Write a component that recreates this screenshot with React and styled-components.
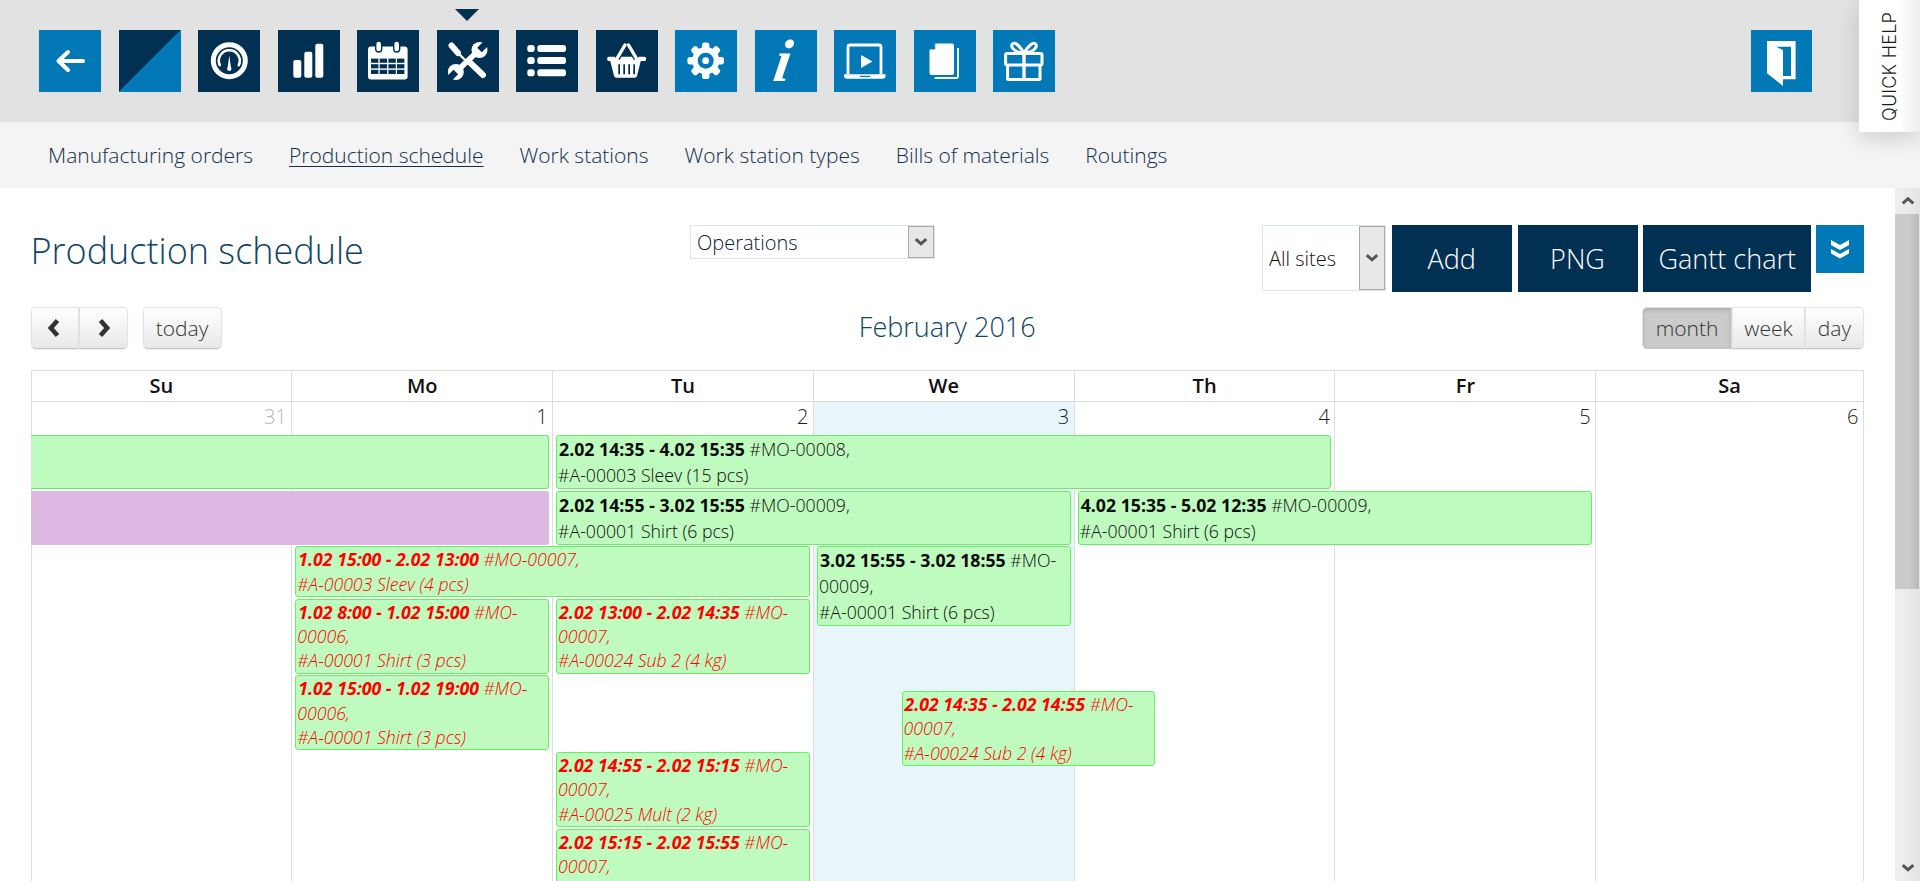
import React from 'react'
import styled, { createGlobalStyle, css } from 'styled-components'

const GlobalStyle = createGlobalStyle`
    html, body {
        margin: 0;
        padding: 0;
        height: 100%;
        overflow: hidden;
        background: white;
        font-family: "Open Sans", "Liberation Sans", sans-serif;
        font-weight: 300;
        color: #12293f;
    }
    * { box-sizing: border-box; }
`

const Page = styled.div`
    position: relative;
    height: 100vh;
    display: flex;
    flex-direction: column;
    overflow: hidden;
`
const TopBar = styled.div`
    flex: 0 0 122px;
    background: #e2e2e2;
    display: flex;
    align-items: flex-start;
    gap: 17.5px;
    padding: 30px 0 0 39px;
`
const IconButton = styled.div`
    position: relative;
    flex: 0 0 62px;
    height: 62px;
    background: ${props => props.$dark ? '#013052' : '#0279b6'};
    color: white;
    display: flex;
    align-items: center;
    justify-content: center;
    svg { display: block; }
    ${props => props.$split && css`
        background: linear-gradient(to top left, #0279b6 50%, #013052 50.4%);
    `}
    ${props => props.$active && css`
        &::before {
            content: '';
            position: absolute;
            top: -21px;
            left: 18px;
            border-left: 12px solid transparent;
            border-right: 12px solid transparent;
            border-top: 12px solid #013052;
        }
    `}
`
const ExitButton = styled(IconButton)`
    margin-left: auto;
    margin-right: 108px;
    flex-basis: 61px;
`
const InfoGlyph = styled.span`
    font-family: "Liberation Serif", serif;
    font-style: italic;
    font-weight: 700;
    font-size: 60px;
    line-height: 1;
    transform: skewX(-9deg) translateX(-2px);
`
const QuickHelp = styled.div`
    position: absolute;
    top: 0;
    right: 0;
    width: 61px;
    height: 132px;
    background: linear-gradient(to right, #fff 65%, #eee);
    box-shadow: 0 6px 22px rgba(0, 0, 0, .16);
    display: flex;
    align-items: center;
    justify-content: center;
    z-index: 3;
    span {
        writing-mode: vertical-rl;
        transform: rotate(180deg);
        font-family: Inter, "Open Sans", sans-serif;
        font-size: 18px;
        font-weight: 300;
        letter-spacing: .2px;
        color: #1c1c1c;
        white-space: nowrap;
    }
`
const Nav = styled.nav`
    flex: 0 0 66px;
    background: #f4f4f4;
    display: flex;
    align-items: center;
    gap: 36px;
    padding-left: 48px;
`
const NavLink = styled.a`
    font-size: 21px;
    line-height: 24px;
    color: #12304c;
    text-decoration: ${props => props.$current ? 'underline' : 'none'};
    text-underline-offset: 3px;
    text-decoration-thickness: 1px;
`
const Body = styled.div`
    flex: 1;
    min-height: 0;
    display: flex;
`
const Pane = styled.main`
    flex: 1;
    min-width: 0;
    overflow: hidden;
    padding: 37px 31px 0 30.5px;
`
const ScrollBar = styled.div`
    flex: 0 0 25px;
    background: linear-gradient(to right, #eef0f0, #e4e4e4);
    display: flex;
    flex-direction: column;
    color: #555;
`
const ScrollArrow = styled.div`
    flex: 0 0 26px;
    display: flex;
    align-items: center;
    justify-content: center;
    margin-top: ${props => props.$end ? 'auto' : '0'};
`
const ScrollThumb = styled.div`
    height: 375px;
    margin-right: 1px;
    background: linear-gradient(to right, #cbcbcb 60%, #b9b9b9);
`
const Header = styled.div`
    display: grid;
    grid-template-columns: 659.5px 572px 1fr;
    align-items: start;
`
const Title = styled.h1`
    margin: 0;
    font-size: 36px;
    line-height: 52px;
    font-weight: 300;
    color: #104467;
`
const SelectBox = styled.div`
    display: flex;
    align-items: center;
    justify-content: space-between;
    border: 1px solid #dbe5ec;
    background: white;
    font-size: 20px;
    font-weight: 300;
    color: #0d2236;
    padding-left: 6px;
    width: 245px;
    height: 34px;
`
const SitesBox = styled(SelectBox)`
    color: #111;
    flex: 0 0 124px;
    width: 124px;
    height: 66px;
`
const SelectArrow = styled.div`
    align-self: stretch;
    flex: 0 0 26px;
    background: #e8e8e8;
    border: 1px solid #aaa;
    color: #555;
    display: flex;
    align-items: center;
    justify-content: center;
`
const Actions = styled.div`
    display: flex;
    align-items: flex-start;
    gap: 5.75px;
`
const ActionButton = styled.button`
    flex: 0 0 ${props => props.$width}px;
    height: 67px;
    border: none;
    padding: 0;
    background: #013052;
    color: white;
    font-family: inherit;
    font-size: 27px;
    font-weight: 300;
`
const ExpandButton = styled.div`
    flex: 0 0 48px;
    height: 48px;
    margin-left: -1px;
    background: #0279b6;
    display: flex;
    align-items: center;
    justify-content: center;
`
const Toolbar = styled.div`
    display: grid;
    grid-template-columns: 1fr auto 1fr;
    align-items: center;
    height: 42px;
    margin-top: 15px;
`
const ToolGroup = styled.div`
    display: flex;
    justify-content: ${props => props.$right ? 'flex-end' : 'flex-start'};
`
const FcButton = styled.div`
    height: 42px;
    width: ${props => props.$width}px;
    margin-left: ${props => props.$gap || 0}px;
    display: flex;
    align-items: center;
    justify-content: center;
    font-size: 21px;
    color: #333;
    background: linear-gradient(to bottom, #fff, #e8e8e8);
    border: 1px solid #e3e3e3;
    border-bottom-color: #c4c4c4;
    box-shadow: 0 1px 2px rgba(0, 0, 0, .07);
    border-radius: ${props => props.$first ? '5px 0 0 5px' : props.$last ? '0 5px 5px 0' : props.$solo ? '5px' : '0'};
    ${props => props.$on && css`
        background: #cbcbcb;
        box-shadow: inset 0 2px 4px rgba(0, 0, 0, .15);
        color: #333;
    `}
`
const MonthTitle = styled.div`
    font-size: 27px;
    line-height: 36px;
    margin-top: -3px;
    font-weight: 300;
    color: #104467;
`
const Calendar = styled.div`
    margin-top: 21px;
    border-top: 1px solid #ddd;
    border-right: 1px solid #ddd;
`
const DayHead = styled.div`
    display: grid;
    grid-template-columns: repeat(6, 260.8px) 1fr;
    height: 31px;
    border-bottom: 1px solid #ddd;
`
const HeadCell = styled.div`
    border-left: 1px solid #ddd;
    text-align: center;
    font-size: 20px;
    line-height: 29px;
    font-weight: 600;
    color: #111;
`
const Week = styled.div`
    position: relative;
    min-height: 480px;
`
const BgColumns = styled.div`
    position: absolute;
    inset: 0;
    display: grid;
    grid-template-columns: repeat(6, 260.8px) 1fr;
`
const BgCell = styled.div`
    border-left: 1px solid #ddd;
    background: ${props => props.$today ? '#e8f5fb' : 'transparent'};
`
const WeekRows = styled.div`
    position: relative;
    display: grid;
    grid-template-columns: repeat(6, 260.8px) 1fr;
    row-gap: 1.5px;
`
const DayNumber = styled.div`
    grid-row: 1;
    height: 31.7px;
    padding: 0 4.5px 0 0;
    text-align: right;
    font-size: 20px;
    line-height: 30px;
    color: ${props => props.$other ? '#b5b5b5' : '#222'};
`
const Event = styled.div`
    grid-column: ${props => props.$col} / span ${props => props.$span || 1};
    grid-row: ${props => props.$row};
    align-self: start;
    margin: 0 3px 0 4px;
    padding: 0 1px;
    background: #bffabf;
    border: 1px solid #66ee66;
    border-radius: 3px;
    font-size: 17.7px;
    line-height: 26px;
    color: #0b0b0b;
    ${props => props.$late && css`
        color: #f00;
        font-style: italic;
        line-height: 24.4px;
    `}
    ${props => props.$cut && css`
        margin-left: 0;
        height: 54px;
        border-left: none;
        border-radius: 0 3px 3px 0;
    `}
    ${props => props.$purple && css`
        background: #dcb8e2;
        border-color: #dcb8e2;
    `}
    b {
        font-weight: 700;
        margin-left: 1px;
    }
`
const FloatingEvent = styled(Event)`
    position: absolute;
    left: 871px;
    top: 289px;
    width: 253px;
    margin: 0;
    z-index: 2;
`

const Chevron = ({ dir = 'down', size = 14, width = 3 }) => {
    const points = {
        down: '3,7 12,15 21,7',
        up: '3,16 12,8 21,16',
        left: '15,3 7,12 15,21',
        right: '9,3 17,12 9,21',
    }
    return (
        <svg width={size} height={size} viewBox="0 0 24 24" fill="none" stroke="currentColor" strokeWidth={width * 24 / size}>
            <polyline points={points[dir]} />
        </svg>
    )
}

const Svg = ({ children }) => (
    <svg width="62" height="62" viewBox="0 0 62 62" fill="white">{children}</svg>
)
const BackIcon = () => (
    <Svg><path d="M44 31H20M29 22l-9.500 9 9.500 9" fill="none" stroke="white" strokeWidth="4" strokeLinecap="round" strokeLinejoin="round" /></Svg>
)
const GaugeIcon = () => (
    <Svg>
        <circle cx="31.3" cy="30.7" r="16" fill="none" stroke="white" strokeWidth="5" />
        <path d="M21.800 35.200a10.500 10.500 0 1 1 19 0" fill="none" stroke="white" strokeWidth="2.600" strokeLinecap="round" />
        <path d="M31.300 25.500l1.600 11.500a2.500 2.500 0 0 1 .5 2 2.100 2.100 0 0 1-4.200 0 2.500 2.500 0 0 1 .5-2z" />
    </Svg>
)
const BarsIcon = () => (
    <Svg>
        <rect x="15.3" y="30" width="8" height="17.8" rx="2" />
        <rect x="26.3" y="21.7" width="8" height="26.1" rx="2" />
        <rect x="37.3" y="13.7" width="8" height="34.1" rx="2" />
    </Svg>
)
const CalendarIcon = () => (
    <Svg>
        <rect x="11" y="16.5" width="39.6" height="33" rx="3" />
        {[21.7, 39.7].map(x => (
            <rect key={x} x={x - 3} y="11" width="6" height="11" rx="3" stroke="#013052" strokeWidth="1.4" />
        ))}
        {[28.6, 34.2, 39.8].map(y => [14, 22.7, 31.4, 40].map(x => (
            <rect key={`${x}-${y}`} x={x} y={y} width="7.4" height="4.2" fill="#013052" />
        )))}
    </Svg>
)
const ToolsIcon = () => (
    <Svg>
        <g fill="none" stroke="white" strokeLinecap="round">
            <path d="M14.500 15.500l6.500 7.500" strokeWidth="6" />
            <path d="M21 23l9 9" strokeWidth="2.400" />
            <path d="M33.500 33l12.500 12" strokeWidth="6" />
            <path d="M21 40L40 22" strokeWidth="5.600" />
        </g>
        <circle cx="42.500" cy="20" r="8" />
        <circle cx="18.800" cy="42" r="8" />
        <g fill="none" stroke="#013052" strokeWidth="6.500">
            <path d="M42.500 20l9-9" />
            <path d="M18.800 42l-9 9" />
        </g>
    </Svg>
)
const ListIcon = () => (
    <Svg>
        {[15, 27, 39.2].map(y => (
            <g key={y}>
                <rect x="11.3" y={y} width="7.4" height="7" rx="2.8" />
                <rect x="21.3" y={y} width="28.7" height="7" rx="2.8" />
            </g>
        ))}
    </Svg>
)
const BasketIcon = () => (
    <Svg>
        <rect x="11.3" y="26.7" width="38.7" height="4.4" rx="1.5" />
        <path d="M14 30h31l-4 16a2.400 2.400 0 0 1-2.200 1.700H20.300a2.400 2.400 0 0 1-2.200-1.700z" />
        <path d="M21 28.500L29 15M40.500 28.500L32.500 15" fill="none" stroke="#013052" strokeWidth="6" />
        <path d="M21 28.500L29 15M40.500 28.500L32.500 15" fill="none" stroke="white" strokeWidth="3.400" strokeLinecap="round" />
        {[22.3, 27.3, 32.3, 37.3].map(x => (
            <rect key={x} x={x} y="34.3" width="1.7" height="10" fill="#013052" />
        ))}
    </Svg>
)
const GearIcon = () => (
    <Svg>
        {[0, 45, 90, 135, 180, 225, 270, 315].map(deg => (
            <rect key={deg} x="27" y="12.4" width="7.4" height="9" rx="2.6" transform={`rotate(${deg} 30.7 30.7)`} />
        ))}
        <circle cx="30.7" cy="30.7" r="13.6" />
        <circle cx="30.7" cy="30.7" r="8" fill="#0279b6" />
        <circle cx="30.7" cy="30.7" r="3.4" />
    </Svg>
)
const LaptopIcon = () => (
    <Svg>
        <path d="M14 44V17a2 2 0 0 1 2-2h29a2 2 0 0 1 2 2v27" fill="none" stroke="white" strokeWidth="2.8" />
        <path d="M10 44.200h41.600v1.600a3 3 0 0 1-3 3H13a3 3 0 0 1-3-3z" />
        <rect x="26" y="45.8" width="10" height="1.2" fill="#0279b6" />
        <path d="M27 25l11.400 6.500L27 38z" />
    </Svg>
)
const DocsIcon = () => (
    <Svg>
        <path d="M21 13.500h17a2 2 0 0 1 2 2V43a2 2 0 0 1-2 2H17.500a2 2 0 0 1-2-2V20z" />
        <path d="M15.800 19l5-5.200V19z" fill="#0279b6" stroke="#0279b6" strokeWidth=".8" />
        <path d="M44 18v28.500a1.500 1.500 0 0 1-1.500 1.500H20.600" fill="none" stroke="white" strokeWidth="1.800" />
    </Svg>
)
const GiftIcon = () => (
    <Svg>
        <g fill="none" stroke="white" strokeWidth="3">
            <rect x="12.600" y="23.500" width="36.400" height="11.500" rx="1.500" />
            <path d="M14.600 35v13.500a1 1 0 0 0 1 1h30.400a1 1 0 0 0 1-1V35" />
            <path d="M31 23.500v26" strokeWidth="3.400" />
            <path d="M31 23c-3-5-8-11-11-9.500s-1.500 8.500 11 9.500zM31 23c3-5 8-11 11-9.500s1.500 8.500-11 9.500z" strokeWidth="3" />
        </g>
    </Svg>
)
const ExitIcon = () => (
    <svg width="61" height="62" viewBox="0 0 61 62">
        <path d="M16 11h28.600v38.300H32V56L16 43.300z" fill="white" />
        <path d="M25 16.700h15V46h-8V20z" fill="#0279b6" />
    </svg>
)

const menu = [
    { key: 'back', icon: <BackIcon /> },
    { key: 'split', split: true },
    { key: 'gauge', dark: true, icon: <GaugeIcon /> },
    { key: 'bars', dark: true, icon: <BarsIcon /> },
    { key: 'calendar', dark: true, icon: <CalendarIcon /> },
    { key: 'tools', dark: true, active: true, icon: <ToolsIcon /> },
    { key: 'list', dark: true, icon: <ListIcon /> },
    { key: 'basket', dark: true, icon: <BasketIcon /> },
    { key: 'gear', icon: <GearIcon /> },
    { key: 'info', icon: <InfoGlyph>i</InfoGlyph> },
    { key: 'laptop', icon: <LaptopIcon /> },
    { key: 'docs', icon: <DocsIcon /> },
    { key: 'gift', icon: <GiftIcon /> },
]

const links = ['Manufacturing orders', 'Production schedule', 'Work stations', 'Work station types', 'Bills of materials', 'Routings']
const weekDays = ['Su', 'Mo', 'Tu', 'We', 'Th', 'Fr', 'Sa']
const dayNumbers = [31, 1, 2, 3, 4, 5, 6]

const events = [
    { col: 3, span: 3, row: 2, time: '2.02 14:35 - 4.02 15:35', order: '#MO-00008', item: '#A-00003 Sleev (15 pcs)' },
    { col: 3, span: 2, row: 3, time: '2.02 14:55 - 3.02 15:55', order: '#MO-00009', item: '#A-00001 Shirt (6 pcs)' },
    { col: 5, span: 2, row: 3, time: '4.02 15:35 - 5.02 12:35', order: '#MO-00009', item: '#A-00001 Shirt (6 pcs)' },
    { col: 2, span: 2, row: 4, late: true, time: '1.02 15:00 - 2.02 13:00', order: '#MO-00007', item: '#A-00003 Sleev (4 pcs)' },
    { col: 4, row: '4 / 6', time: '3.02 15:55 - 3.02 18:55', order: '#MO-00009', item: '#A-00001 Shirt (6 pcs)' },
    { col: 2, row: 5, late: true, time: '1.02 8:00 - 1.02 15:00', order: '#MO-00006', item: '#A-00001 Shirt (3 pcs)' },
    { col: 3, row: 5, late: true, time: '2.02 13:00 - 2.02 14:35', order: '#MO-00007', item: '#A-00024 Sub 2 (4 kg)' },
    { col: 2, row: 6, late: true, time: '1.02 15:00 - 1.02 19:00', order: '#MO-00006', item: '#A-00001 Shirt (3 pcs)' },
    { col: 3, row: 7, late: true, time: '2.02 14:55 - 2.02 15:15', order: '#MO-00007', item: '#A-00025 Mult (2 kg)' },
    { col: 3, row: 8, late: true, time: '2.02 15:15 - 2.02 15:55', order: '#MO-00007', item: '\u00a0' },
]

const EventText = ({ time, order, item }) => (
    <>
        <b>{time}</b> {order},<br />{item}
    </>
)

const App = () => {
    return (
        <Page>
            <GlobalStyle />
            <TopBar>
                {menu.map(m => (
                    <IconButton key={m.key} $dark={m.dark} $split={m.split} $active={m.active}>{m.icon}</IconButton>
                ))}
                <ExitButton><ExitIcon /></ExitButton>
            </TopBar>
            <QuickHelp><span>QUICK HELP</span></QuickHelp>
            <Nav>
                {links.map(l => (
                    <NavLink key={l} $current={l === 'Production schedule'}>{l}</NavLink>
                ))}
            </Nav>
            <Body>
                <Pane>
                    <Header>
                        <Title>Production schedule</Title>
                        <SelectBox>
                            Operations
                            <SelectArrow><Chevron size={14} width={3} /></SelectArrow>
                        </SelectBox>
                        <Actions>
                            <SitesBox>
                                All sites
                                <SelectArrow><Chevron size={14} width={3} /></SelectArrow>
                            </SitesBox>
                            <ActionButton $width={120}>Add</ActionButton>
                            <ActionButton $width={120}>PNG</ActionButton>
                            <ActionButton $width={168}>Gantt chart</ActionButton>
                            <ExpandButton>
                                <svg width="48" height="48" viewBox="0 0 48 48" fill="white">
                                    <path d="M15 15l9 5 9-5v5l-9 5-9-5z" />
                                    <path d="M15 24l9 5 9-5v4.500l-9 5-9-5z" />
                                </svg>
                            </ExpandButton>
                        </Actions>
                    </Header>
                    <Toolbar>
                        <ToolGroup>
                            <FcButton $width={48} $first><Chevron dir="left" size={20} width={4.6} /></FcButton>
                            <FcButton $width={49} $last><Chevron dir="right" size={20} width={4.6} /></FcButton>
                            <FcButton $width={79} $gap={15} $solo>today</FcButton>
                        </ToolGroup>
                        <MonthTitle>February 2016</MonthTitle>
                        <ToolGroup $right>
                            <FcButton $width={90} $first $on>month</FcButton>
                            <FcButton $width={73}>week</FcButton>
                            <FcButton $width={59} $last>day</FcButton>
                        </ToolGroup>
                    </Toolbar>
                    <Calendar>
                        <DayHead>
                            {weekDays.map(d => <HeadCell key={d}>{d}</HeadCell>)}
                        </DayHead>
                        <Week>
                            <BgColumns>
                                {weekDays.map(d => <BgCell key={d} $today={d === 'We'} />)}
                            </BgColumns>
                            <WeekRows>
                                {dayNumbers.map(n => <DayNumber key={n} $other={n === 31}>{n}</DayNumber>)}
                                <Event $col={1} $span={2} $row={2} $cut />
                                <Event $col={1} $span={2} $row={3} $cut $purple />
                                {events.map(e => (
                                    <Event key={e.time} $col={e.col} $span={e.span} $row={e.row} $late={e.late}>
                                        <EventText {...e} />
                                    </Event>
                                ))}
                            </WeekRows>
                            <FloatingEvent $col={1} $row={1} $late>
                                <EventText time="2.02 14:35 - 2.02 14:55" order="#MO-00007" item="#A-00024 Sub 2 (4 kg)" />
                            </FloatingEvent>
                        </Week>
                    </Calendar>
                </Pane>
                <ScrollBar>
                    <ScrollArrow><Chevron dir="up" size={14} width={3} /></ScrollArrow>
                    <ScrollThumb />
                    <ScrollArrow $end><Chevron dir="down" size={14} width={3} /></ScrollArrow>
                </ScrollBar>
            </Body>
        </Page>
    )
}

export default App
